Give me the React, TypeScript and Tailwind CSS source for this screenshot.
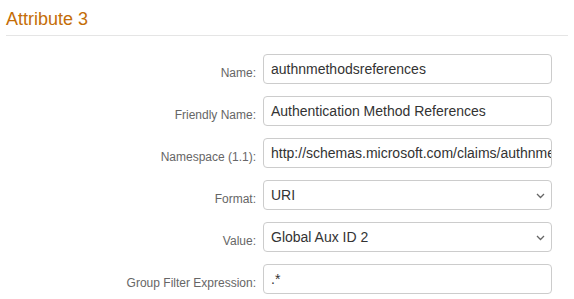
import React from "react";

const Chevron = () => (
  <svg width="9" height="6" viewBox="0 0 9 6" className="absolute right-[6px] top-[12px]">
    <path d="M1 1 L4.5 4.5 L8 1" fill="none" stroke="#666" strokeWidth="1.3" />
  </svg>
);

function Field({ value, select }: { value: string; select?: boolean }) {
  return (
    <div className="relative h-[30px] w-[289px] rounded-[4px] border border-[#cccccc] bg-white pl-[7px] pr-[8px] flex items-center overflow-hidden">
      <span className="whitespace-nowrap text-[14px] leading-[16px] text-[#333]">{value}</span>
      {select && <Chevron />}
    </div>
  );
}

function Row({ label, value, select }: { label: string; value: string; select?: boolean }) {
  return (
    <div className="flex gap-[7px]">
      <div className="w-[256px] text-right text-[12px] leading-[14px] text-[#666] pt-[12px] whitespace-nowrap">{label}</div>
      <Field value={value} select={select} />
    </div>
  );
}

export default function App() {
  return (
    <div className="w-[574px] h-[299px] bg-white overflow-hidden" style={{ fontFamily: '"Liberation Sans", Arial, sans-serif' }}>
      <div className="mx-[6px] pt-[9px] pb-[6px] border-b border-[#e5e5e5]">
        <div className="text-[18px] leading-[20px] text-[#c46d07]">Attribute 3</div>
      </div>
      <div className="mt-[18px] flex flex-col gap-[12px]">
        <Row label="Name:" value="authnmethodsreferences" />
        <Row label="Friendly Name:" value="Authentication Method References" />
        <Row label="Namespace (1.1):" value="http://schemas.microsoft.com/claims/authnmethodsreferences" />
        <Row label="Format:" value="URI" select />
        <Row label="Value:" value="Global Aux ID 2" select />
        <Row label="Group Filter Expression:" value=".*" />
      </div>
    </div>
  );
}
